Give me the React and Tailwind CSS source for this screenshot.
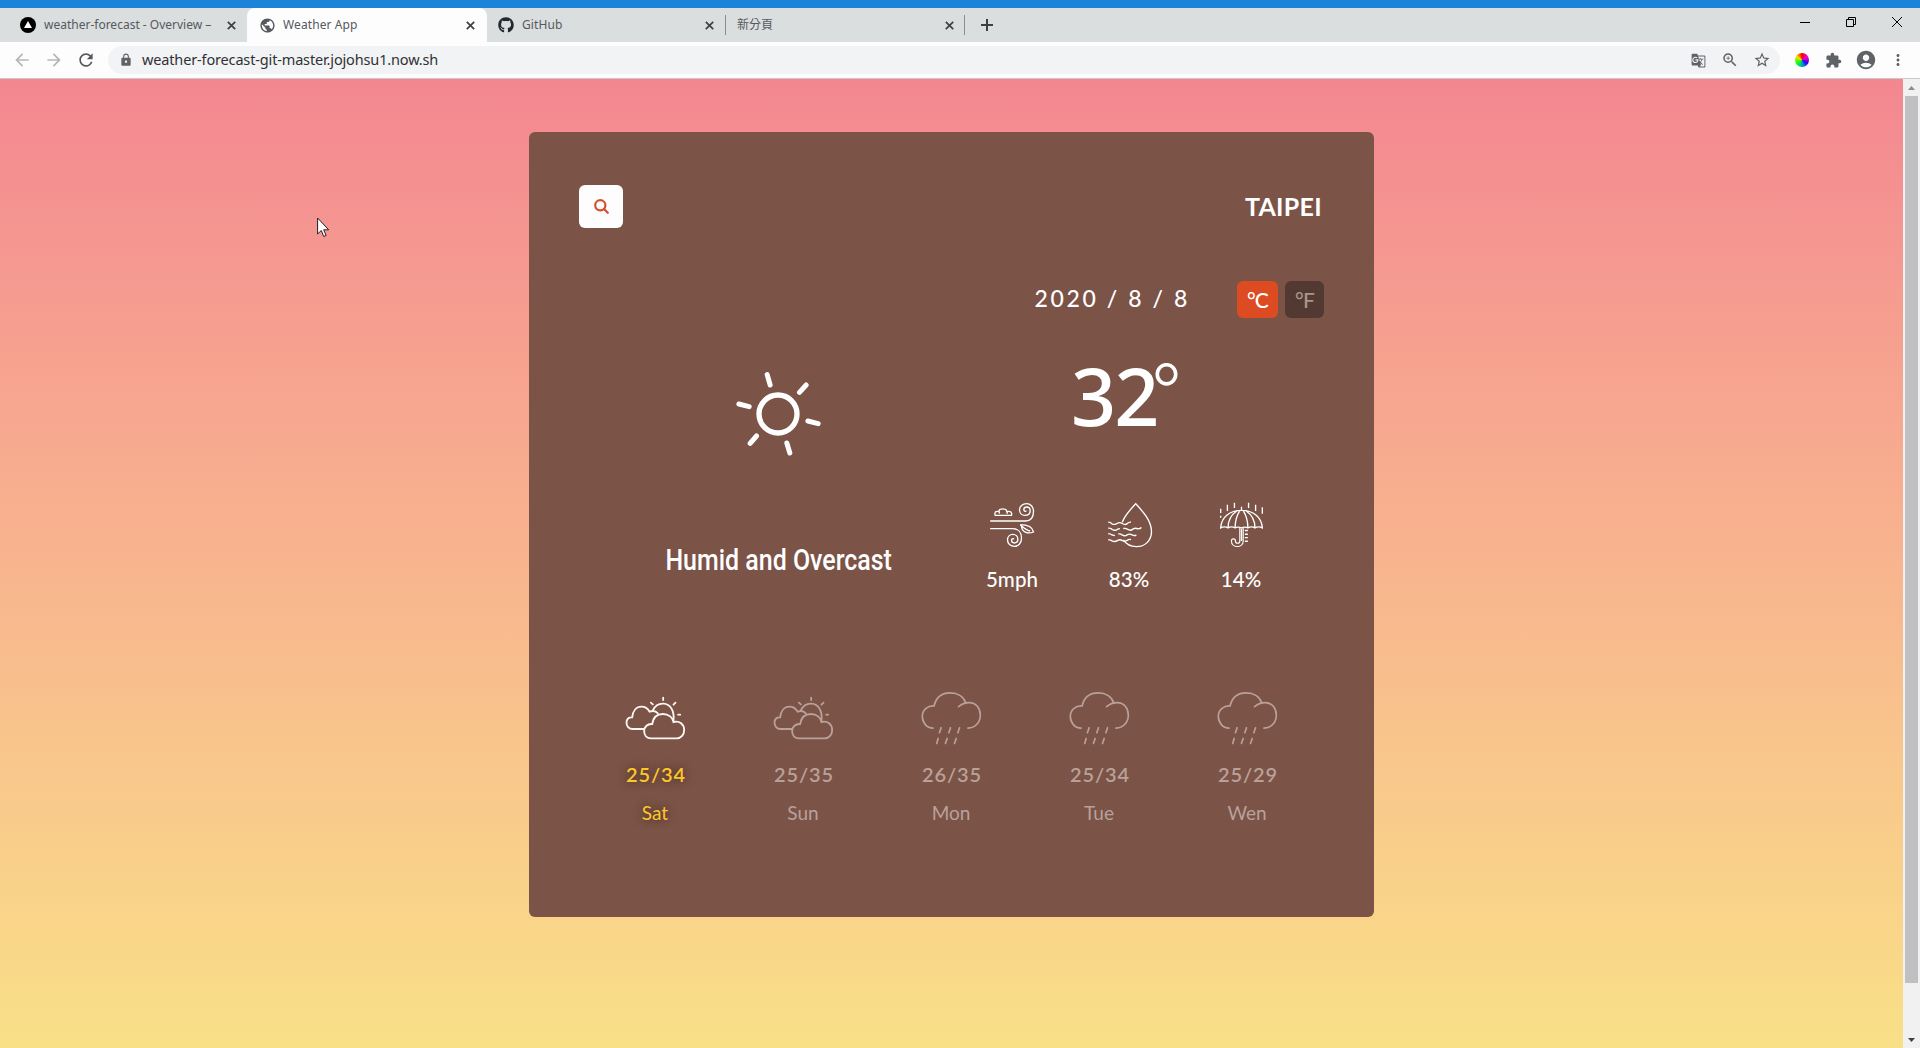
import { FaGithub } from "react-icons/fa";
import {
  MdArrowBack,
  MdArrowForward,
  MdRefresh,
  MdLock,
  MdPublic,
  MdGTranslate,
  MdZoomIn,
  MdStarBorder,
  MdExtension,
  MdAccountCircle,
  MdMoreVert,
} from "react-icons/md";

const SMALL_X = (
  <svg width="9" height="9" viewBox="0 0 9 9" stroke="#3c4043" strokeWidth="1.7" fill="none">
    <path d="M.8.8l7.4 7.4M8.2.8L.8 8.2" />
  </svg>
);

function TabStrip() {
  return (
    <div className="flex h-[34px] items-end bg-[#dadedf] text-[12px] text-[#55595d]">
      <div className="flex h-[34px] w-[247px] items-center bg-[#dadedf] pr-[11px] pl-5">
        <svg width="16" height="16" viewBox="0 0 16 16">
          <circle cx="8" cy="8" r="8" fill="#000" />
          <path d="M8 4l4 7H4z" fill="#fff" />
        </svg>
        <span className="ml-2 w-[174px] overflow-hidden whitespace-nowrap">weather-forecast - Overview –</span>
        <span className="ml-auto">{SMALL_X}</span>
      </div>
      <div className="flex h-[34px] w-[240px] items-center rounded-t-lg bg-[#fdfdfe] pr-[12px] pl-3">
        <MdPublic size={17} color="#55595d" />
        <span className="ml-[7px] tracking-[0.1px]">Weather App</span>
        <span className="ml-auto">{SMALL_X}</span>
      </div>
      <div className="flex h-[34px] w-[238px] items-center rounded-bl-lg pr-[11px] pl-[11px]">
        <FaGithub size={16} color="#24292e" />
        <span className="ml-2 tracking-[0.1px]">GitHub</span>
        <span className="ml-auto">{SMALL_X}</span>
      </div>
      <div className="flex h-[34px] w-[239px] items-center">
        <div className="h-5 w-px bg-[#8a8d91]" />
        <span className="ml-[11px]">新分頁</span>
        <span className="mr-[10px] ml-auto">{SMALL_X}</span>
      </div>
      <div className="flex h-[34px] flex-1 items-center">
        <div className="h-5 w-px bg-[#8a8d91]" />
        <svg className="ml-4" width="12" height="12" viewBox="0 0 12 12" stroke="#3c4043" strokeWidth="2">
          <path d="M6 0v12M0 6h12" />
        </svg>
        <div className="mr-[18px] mb-[6px] ml-auto flex items-center gap-9 text-black">
          <svg width="10" height="10" viewBox="0 0 10 10" stroke="currentColor">
            <path d="M0 5.5h10" />
          </svg>
          <svg width="10" height="10" viewBox="0 0 10 10" stroke="currentColor" fill="none">
            <path d="M.5 2.5h7v7h-7zM2.5 2.5v-2h7v7h-2" />
          </svg>
          <svg width="10" height="10" viewBox="0 0 10 10" stroke="currentColor">
            <path d="M0 0l10 10M10 0L0 10" />
          </svg>
        </div>
      </div>
    </div>
  );
}

function ColorWheel() {
  return (
    <div className="h-[14px] w-[14px] rounded-full bg-[conic-gradient(#e00,#f0c_17%,#20e_34%,#08c_46%,#0d6_58%,#3f0_70%,#fd0_84%,#e00)]" />
  );
}

function Toolbar() {
  return (
    <div className="flex h-[37px] items-center border-b border-[#c9c9cc] bg-[#fdfdfe] pl-[12px] text-[#5f6368]">
      <MdArrowBack size={20} color="#b4b6b9" />
      <MdArrowForward className="ml-[12px]" size={20} color="#b4b6b9" />
      <MdRefresh className="ml-[12px]" size={20} color="#55595d" />
      <div className="ml-[12px] flex h-7 w-[1672px] items-center rounded-full bg-[#f1f3f4] pr-[9px] pl-[11px]">
        <MdLock size={14} />
        <span className="ml-[9px] text-[14.5px] tracking-[-0.15px] text-[#303134]">weather-forecast-git-master.jojohsu1.now.sh</span>
        <MdGTranslate className="ml-auto" size={15} />
        <MdZoomIn className="ml-[15px]" size={18} />
        <MdStarBorder className="ml-[14px]" size={18} />
      </div>
      <div className="ml-[15px]">
        <ColorWheel />
      </div>
      <MdExtension className="ml-[16px]" size={17} />
      <MdAccountCircle className="ml-[13px]" size={22} />
      <MdMoreVert className="ml-[12px]" size={18} />
    </div>
  );
}

function SunIcon() {
  return (
    <svg width="85" height="84" viewBox="290 97 254 252" stroke="#fff" fill="none">
      <circle cx="415.5" cy="223" r="57" strokeWidth="16" />
      <path
        strokeWidth="15"
        strokeLinecap="round"
        d="M383 105l9 31M500 136l-20 22M298 193l31 8M505 244l31 8M351 289l-19 22M442 310l9 30"
      />
    </svg>
  );
}

function WindIcon() {
  return (
    <svg width="46" height="46" viewBox="90 486 137 138" stroke="#fff" strokeWidth="4" fill="none">
      <path d="M93 543H199C216 543 223 530 223 514C223 500 214 491 202 491C190 491 181 499 181 509C181 519 188 526 197 526C207 526 213 520 213 512C213 505 208 501 203 501C197 501 194 505 194 509C194 513 198 515 202 513" />
      <path d="M93 566H160C177 566 187 577 187 594C187 609 178 619 166 619C154 619 145 611 145 600C145 590 152 583 161 583C170 583 176 590 176 598C176 605 171 609 166 609C160 609 157 605 157 601C157 597 161 595 165 597" />
      <path d="M108 526C105 517 109 512 119 515C119 504 142 504 143 515C154 512 160 517 157 526ZM121 521L120 515M145 521L143 515" />
      <path d="M183 554C205 554 220 561 223 576C205 583 187 576 187 558M183 554C193 563 203 571 213 573" />
    </svg>
  );
}

function HumidityIcon() {
  return (
    <svg className="translate-x-px" width="46" height="46" viewBox="442 486 136 137" stroke="#fff" strokeWidth="4" fill="none">
      <path d="M487 546C495 525 511 508 527 491C548 514 574 542 574 574C574 602 554 619 529 619C510 619 498 611 490 599" />
      <path d="M445 546q8 0 11 5q10 4 15-1q8-5 16 0q9 6 15 0q5-5 11-4M445 564q8-1 12 4q9 5 16-1l7-2M490 565q8-2 12 2q10 6 16 0q9-5 15-1q7 0 11-4M445 580q8 0 11 4l9 2M475 581q8-1 11 3q9 5 15 0q9-5 15 0q5 3 13 1M445 599q8-1 11 3q10 4 16-1q8-5 15 0q9 4 15-1q5-4 11-2" />
    </svg>
  );
}

function UmbrellaIcon() {
  return (
    <svg width="45" height="46" viewBox="778 486 134 137" stroke="#fff" strokeWidth="4" fill="none">
      <path d="M783 563C785 530 811 511 845 511C879 511 905 530 907 563Q896 557 885 563Q875 557 864 563Q854 559 845 563Q835 559 826 563Q815 557 805 563Q794 557 783 563ZM845 511V500M805 563C805 540 816 523 831 513M826 563C826 543 833 523 840 512M885 563C885 540 874 523 859 513M864 563C864 543 857 523 850 512" />
      <path d="M840 563V602C840 611 827 611 827 602C827 594 815 594 815 602C815 624 850 624 850 602V563M845 566V602" strokeWidth="3.5" />
      <path d="M783 506v13M783 527v6M803 494v19M824 488v16M866 488v16M887 494v19M907 502v19M855 571h9M855 582h9M855 592h9M855 603h9" />
    </svg>
  );
}

function PartlyCloudyIcon() {
  return (
    <svg width="61" height="44" viewBox="76 78 182 132" stroke="currentColor" strokeWidth="5.5" fill="none" strokeLinecap="round">
      <path d="M153 205C141 205 133 196 133 184C133 170 143 161 157 162C160 143 172 132 189 132C207 132 219 143 221 156C239 151 253 163 253 180C253 194 244 205 231 205Z" />
      <path d="M133 177H98C87 177 80 168 80 158C80 147 87 141 97 142C99 122 110 110 125 110C136 110 144 116 149 125C160 121 169 124 174 130M159 121C166 107 177 100 191 101C211 102 224 121 221 151" />
      <path d="M190 83v7M153 98l6 5M227 98l-6 6M235 134h6" />
    </svg>
  );
}

function RainIcon() {
  return (
    <svg width="61" height="54" viewBox="964 63 182 160" stroke="currentColor" strokeWidth="5" fill="none" strokeLinecap="round">
      <path d="M1000 173C981 173 968 157 968 138C968 119 983 106 1003 107C1009 82 1027 68 1051 68C1074 68 1092 80 1098 99M1076 109C1085 101 1097 97 1108 97C1128 97 1141 114 1141 134C1141 156 1126 173 1104 173" />
      <path d="M1024 172l-5 15M1052 172l-5 15M1079 172l-5 15M1015 204l-4 15M1042 204l-5 15M1069 204l-5 15" />
    </svg>
  );
}

const STATS = [
  { Icon: WindIcon, value: "5mph", width: "w-[118px]" },
  { Icon: HumidityIcon, value: "83%", width: "w-[116px]" },
  { Icon: UmbrellaIcon, value: "14%", width: "w-[108px]" },
];

const DAYS = [
  { temp: "25/34", day: "Sat", Icon: PartlyCloudyIcon, active: true },
  { temp: "25/35", day: "Sun", Icon: PartlyCloudyIcon },
  { temp: "26/35", day: "Mon", Icon: RainIcon },
  { temp: "25/34", day: "Tue", Icon: RainIcon },
  { temp: "25/29", day: "Wen", Icon: RainIcon },
];

function WeatherCard() {
  return (
    <div className="h-[785px] w-[845px] rounded-md bg-[#7b5347] px-[50px] pt-[53px] font-[Lato,sans-serif] text-white">
      <div className="flex h-[43px] items-center justify-between">
        <button className="flex h-[43px] w-11 items-center justify-center rounded-md bg-[#fdfdfe]">
          <svg width="15" height="15" viewBox="0 0 15 15" fill="none" stroke="#d5502a" strokeWidth="2.2" strokeLinecap="round">
            <circle cx="6.3" cy="6.3" r="5.1" />
            <path d="M10.2 10.2l3.6 3.6" />
          </svg>
        </button>
        <h1 className="mr-[2px] text-[25px] font-bold tracking-[0.3px]">TAIPEI</h1>
      </div>

      <div className="mt-[53px] flex h-[37px] items-center justify-end">
        <span className="mr-[47px] mb-[2px] text-[23px] font-medium tracking-[2.6px] whitespace-nowrap">2020 / 8 / 8</span>
        <button className="h-[37px] w-[41px] rounded-md bg-[#dd4b22] text-[21px] font-medium tracking-[-0.8px]">°C</button>
        <button className="ml-[7px] h-[37px] w-[39px] rounded-md bg-[#523a32] text-[21px] font-medium tracking-[-0.8px] text-[#a8958f]">
          °F
        </button>
      </div>

      <div className="flex h-[345px]">
        <div className="flex w-[374px] flex-col items-center pt-[54px] pl-[25px]">
          <SunIcon />
          <p className="mt-[84px] origin-center scale-x-[0.86] font-[Roboto,sans-serif] text-[29px] leading-10 font-medium whitespace-nowrap">
            Humid and Overcast
          </p>
        </div>
        <div className="w-[371px]">
          <div className="flex h-[118px] pt-[38px] pl-[118px]">
            <span className="w-[82px] font-['Noto_Sans',sans-serif] text-[79px] leading-[80px] font-medium tracking-[-2px] whitespace-nowrap">
              32
            </span>
            <svg className="mt-[7px] ml-[2px]" width="23" height="23" viewBox="0 0 23 23" fill="none" stroke="#fff">
              <ellipse cx="11.5" cy="11.3" rx="9.2" ry="9.6" strokeWidth="3.6" />
            </svg>
          </div>
          <div className="mt-[66px] flex">
            {STATS.map(({ Icon, value, width }) => (
              <div key={value} className={`flex shrink-0 flex-col items-center ${width}`}>
                <Icon />
                <span className="mt-[17px] text-[20.5px] leading-7 font-medium tracking-[0.1px]">{value}</span>
              </div>
            ))}
          </div>
        </div>
      </div>

      <div className="flex pl-[2px]">
        {DAYS.map(({ temp, day, Icon, active }) => (
          <div
            key={day}
            className={`flex w-[148px] flex-col items-center pt-[28px] ${active ? "text-[#fdc62a] [text-shadow:0_0_8px_#3b261d]" : "text-[#b9a19a]"}`}
          >
            <div className={`flex h-[54px] items-center ${active ? "text-[#fff8f2]" : ""}`}>
              <Icon />
            </div>
            <span className="mt-[15px] pl-[2px] text-[20px] leading-7 font-semibold tracking-[0.9px]">{temp}</span>
            <span className="mt-[11px] text-[19px] leading-7">{day}</span>
          </div>
        ))}
      </div>
    </div>
  );
}

function Scrollbar() {
  return (
    <div className="flex w-[17px] flex-col items-center bg-[#f1f1f1]">
      <svg width="17" height="17" viewBox="0 0 17 17">
        <path d="M5 11h7l-3.5-4z" fill="#8b8b8b" />
      </svg>
      <div className="h-[887px] w-[13px] bg-[#c0c0c3]" />
      <svg className="mt-auto" width="17" height="17" viewBox="0 0 17 17">
        <path d="M5 7h7l-3.5 4z" fill="#404040" />
      </svg>
    </div>
  );
}

export default function App() {
  return (
    <div className="relative flex h-[1048px] w-[1920px] flex-col overflow-hidden font-['Noto_Sans','Noto_Sans_CJK_TC',sans-serif]">
      <div className="h-2 bg-[#1c84d8]" />
      <TabStrip />
      <Toolbar />
      <div className="flex flex-1">
        <main className="flex flex-1 items-start justify-center bg-linear-to-b from-[#f38791] to-[#f9e087] pt-[53px]">
          <WeatherCard />
        </main>
        <Scrollbar />
      </div>
      <svg className="absolute top-[217px] left-[317px]" width="13" height="21" viewBox="0 0 13 21">
        <path d="M.6 1v16l3.7-3.5L6.7 19.5l2.4-1L6.700 12.8h5z" fill="#fff" stroke="#222" />
      </svg>
    </div>
  );
}
